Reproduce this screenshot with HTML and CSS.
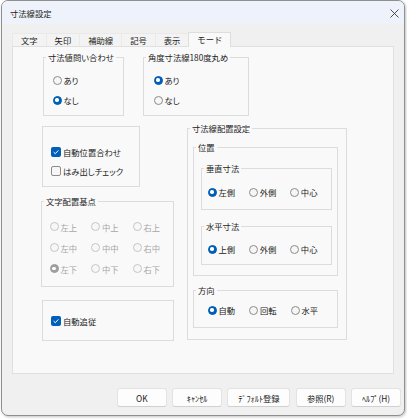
FILE: index.html
```html
<!DOCTYPE html>
<html lang="ja">
<head>
<meta charset="utf-8">
<title>寸法線設定</title>
<link rel="stylesheet" href="styles.css">
</head>
<body>
<div class="window">
  <div class="titlebar">
    <span class="title">寸法線設定</span>
    <span class="close"><svg width="9" height="9" viewBox="0 0 9 9"><path d="M0.5 0.5 L8.5 8.5 M8.5 0.5 L0.5 8.5" stroke="#3a3a3a" stroke-width="0.9" fill="none"/></svg></span>
  </div>
  <div class="content">
    <div class="tabs">
      <div class="tab">文字</div>
      <div class="tab">矢印</div>
      <div class="tab">補助線</div>
      <div class="tab">記号</div>
      <div class="tab">表示</div>
      <div class="tab active">モード</div>
    </div>
    <div class="panel">
      <div class="row1">
        <div class="g g-inq">
          <span class="gt">寸法値問い合わせ</span>
          <div class="stack">
            <span class="opt"><span class="radio"></span>あり</span>
            <span class="opt"><span class="radio on"></span>なし</span>
          </div>
        </div>
        <div class="g g-angle">
          <span class="gt">角度寸法線180度丸め</span>
          <div class="stack">
            <span class="opt"><span class="radio on"></span>あり</span>
            <span class="opt"><span class="radio"></span>なし</span>
          </div>
        </div>
      </div>
      <div class="row2">
        <div class="leftcol">
          <div class="g g-check">
            <span class="opt chk"><span class="cb on"><svg width="10" height="10" viewBox="0 0 10 10"><path d="M2.6 5.1 L4.3 6.7 L7.4 3.4" stroke="#ffffff" stroke-width="1" fill="none"/></svg></span>自動位置合わせ</span>
            <span class="opt chk"><span class="cb"></span>はみ出しチェック</span>
          </div>
          <div class="g g-base">
            <span class="gt">文字配置基点</span>
            <div class="grid3">
              <span class="opt dis"><span class="radio"></span>左上</span>
              <span class="opt dis"><span class="radio"></span>中上</span>
              <span class="opt dis"><span class="radio"></span>右上</span>
              <span class="opt dis"><span class="radio"></span>左中</span>
              <span class="opt dis"><span class="radio"></span>中中</span>
              <span class="opt dis"><span class="radio"></span>右中</span>
              <span class="opt dis"><span class="radio on"></span>左下</span>
              <span class="opt dis"><span class="radio"></span>中下</span>
              <span class="opt dis"><span class="radio"></span>右下</span>
            </div>
          </div>
          <div class="g g-follow">
            <span class="opt chk"><span class="cb on"><svg width="10" height="10" viewBox="0 0 10 10"><path d="M2.6 5.1 L4.3 6.7 L7.4 3.4" stroke="#ffffff" stroke-width="1" fill="none"/></svg></span>自動追従</span>
          </div>
        </div>
        <div class="g g-layout">
          <span class="gt">寸法線配置設定</span>
          <div class="g g-pos">
            <span class="gt">位置</span>
            <div class="g g-vert">
              <span class="gt">垂直寸法</span>
              <div class="hrow">
                <span class="opt"><span class="radio on"></span>左側</span>
                <span class="opt"><span class="radio"></span>外側</span>
                <span class="opt"><span class="radio"></span>中心</span>
              </div>
            </div>
            <div class="g g-horz">
              <span class="gt">水平寸法</span>
              <div class="hrow">
                <span class="opt"><span class="radio on"></span>上側</span>
                <span class="opt"><span class="radio"></span>外側</span>
                <span class="opt"><span class="radio"></span>中心</span>
              </div>
            </div>
          </div>
          <div class="g g-dir">
            <span class="gt">方向</span>
            <div class="hrow">
              <span class="opt"><span class="radio on"></span>自動</span>
              <span class="opt"><span class="radio"></span>回転</span>
              <span class="opt"><span class="radio"></span>水平</span>
            </div>
          </div>
        </div>
      </div>
    </div>
    <div class="buttons">
      <span class="btn">OK</span>
      <span class="btn">ｷｬﾝｾﾙ</span>
      <span class="btn wide">ﾃﾞﾌｫﾙﾄ登録</span>
      <span class="btn">参照(R)</span>
      <span class="btn">ﾍﾙﾌﾟ(H)</span>
    </div>
  </div>
</div>
</body>
</html>
```
FILE: styles.css
```css
* { box-sizing: border-box; }
html, body { margin: 0; padding: 0; }
body {
  width: 407px;
  height: 419px;
  overflow: hidden;
  background: #ffffff;
  font-family: "Noto Sans CJK JP", "Noto Sans", sans-serif;
  font-size: 8.3px;
  font-feature-settings: "palt";
  color: #222222;
}
.window {
  margin-left: 1px;
  width: 404px;
  height: 416px;
  border: 1px solid #8f8f8f;
  border-radius: 7px;
  background: #f0f0f0;
  box-shadow: 1px 1px 3px rgba(0, 0, 0, 0.25);
  overflow: hidden;
}
.titlebar {
  height: 23px;
  background: #eef2fa;
  display: flex;
  align-items: center;
  justify-content: space-between;
  padding: 1px 5px 0 8px;
}
.title { line-height: 12px; font-feature-settings: normal; }
.close { display: flex; width: 9px; height: 9px; }
.content { padding: 8px 2px 0 10px; }
.tabs {
  display: flex;
  align-items: flex-end;
  height: 14px;
  position: relative;
  z-index: 1;
}
.tab {
  height: 13px;
  line-height: 12px;
  padding: 0 8px;
  border: 1px solid #e9e9e9;
  border-bottom: none;
  margin-right: -1px;
  background: #f3f3f3;
  font-feature-settings: normal;
}
.tab.active {
  height: 15px;
  line-height: 13px;
  margin-bottom: -1px;
  background: #f9f9f9;
  border-color: #dedede;
}
.panel {
  width: 382px;
  height: 328px;
  border: 1px solid #e0e0e0;
  background: #f9f9f9;
  padding: 10px 0 0 29px;
}
.g { border: 1px solid #dcdcdc; }
.gt {
  display: block;
  width: max-content;
  margin: -7px 0 0 2px;
  padding: 0 2px;
  line-height: 12px;
  background: #f9f9f9;
}
.row1 { display: flex; margin-left: 1px; }
.g-inq { width: 81px; height: 59px; }
.g-angle { width: 106px; height: 59px; margin-left: 19px; }
.stack { display: flex; flex-direction: column; margin-top: 7px; padding-left: 8.5px; }
.g-angle .stack { padding-left: 9.5px; }
.opt { display: flex; align-items: center; gap: 2px; height: 20px; line-height: 12px; white-space: nowrap; }
.radio {
  width: 9px;
  height: 9px;
  border-radius: 50%;
  border: 1px solid #8b8b8b;
  background: #f6f6f6;
  display: inline-flex;
  align-items: center;
  justify-content: center;
  flex: none;
}
.radio.on { border-color: #005fb8; background: #005fb8; }
.radio.on::after {
  content: "";
  width: 3.5px;
  height: 3.5px;
  border-radius: 50%;
  background: #ffffff;
}
.dis { color: #a6a6a6; }
.dis .radio { border-color: #c6c6c6; background: #f7f7f7; }
.dis .radio.on { border-color: #9f9f9f; background: #9f9f9f; }
.chk { height: 19px; }
.cb {
  width: 10px;
  height: 10px;
  border-radius: 2px;
  border: 1px solid #8b8b8b;
  background: #f6f6f6;
  display: inline-flex;
  flex: none;
}
.cb.on { border: none; background: #005fb8; }
.row2 { display: flex; align-items: flex-start; gap: 13px; }
.leftcol { width: 132px; margin-top: 10px; display: flex; flex-direction: column; }
.g-check { width: 98px; height: 61px; padding: 15px 0 0 8px; }
.g-base { width: 133px; height: 86px; margin: 14px 0 0 -1px; }
.grid3 {
  display: grid;
  grid-template-columns: repeat(3, 41.5px);
  grid-auto-rows: 21px;
  margin-top: 9px;
  padding-left: 7.5px;
}
.grid3 .opt { height: 21px; }
.g-follow { width: 132px; height: 41px; margin-top: 13px; padding: 10px 0 0 8px; }
.g-layout { width: 160px; height: 212px; margin-top: 12px; }
.g-pos { width: 145px; height: 129px; margin: 13px 0 0 5px; }
.g-vert { width: 131px; height: 42px; margin: 15px 0 0 7px; }
.g-vert .hrow { margin-top: 8px; padding-left: 5.5px; }
.g-horz { width: 131px; height: 39px; margin: 16px 0 0 7px; }
.g-horz .hrow { margin-top: 7px; padding-left: 5.5px; }
.g-dir { width: 145px; height: 38px; margin: 14px 0 0 5px; }
.g-dir .hrow { margin-top: 4px; padding-left: 13.5px; }
.hrow { display: flex; }
.hrow .opt { width: 41.5px; }
.buttons {
  display: flex;
  justify-content: flex-end;
  gap: 5.3px;
  margin-top: 14px;
  padding-right: 1px;
}
.btn {
  width: 50px;
  height: 19px;
  display: flex;
  align-items: center;
  justify-content: center;
  background: #fdfdfd;
  border: 1px solid #e3e3e3;
  border-bottom-color: #d0d0d0;
  border-radius: 3px;
  line-height: 12px;
}
.btn.wide { width: 63px; }
```
